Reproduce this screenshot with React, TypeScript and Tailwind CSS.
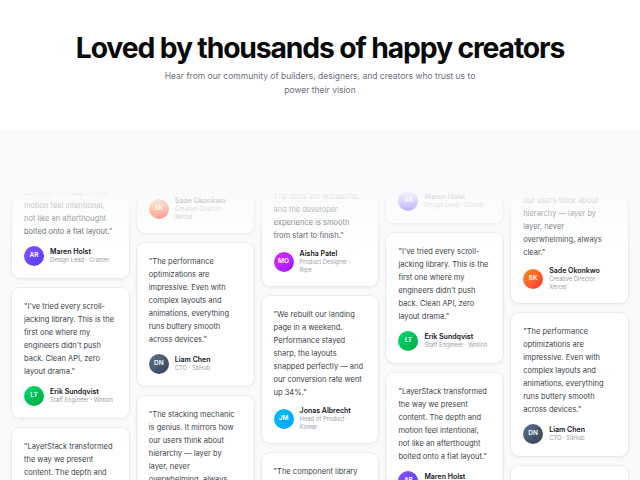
const people = {
  layer: {
    quote:
      "LayerStack transformed the way we present content. The depth and motion feel intentional, not like an afterthought bolted onto a flat layout.",
    name: "Maren Holst",
    role: ["Design Lead · Cramer"],
    initials: "AR",
    avatar: "bg-linear-to-br from-violet-500 to-indigo-600",
  },
  tried: {
    quote:
      "I've tried every scroll-jacking library. This is the first one where my engineers didn't push back. Clean API, zero layout drama.",
    name: "Erik Sundqvist",
    role: ["Staff Engineer · Wotion"],
    initials: "LT",
    avatar: "bg-linear-to-br from-green-400 to-green-600",
  },
  perf: {
    quote:
      "The performance optimizations are impressive. Even with complex layouts and animations, everything runs buttery smooth across devices.",
    name: "Liam Chen",
    role: ["CTO · SitHub"],
    initials: "DN",
    avatar: "bg-linear-to-br from-slate-500 to-slate-700",
  },
  stack: {
    quote:
      "The stacking mechanic is genius. It mirrors how our users think about hierarchy — layer by layer, never overwhelming, always clear.",
    name: "Sade Okonkwo",
    role: ["Creative Director ·", "Xercel"],
    initials: "SK",
    avatar: "bg-linear-to-br from-orange-400 to-red-500",
  },
  rebuilt: {
    quote:
      "We rebuilt our landing page in a weekend. Performance stayed sharp, the layouts snapped perfectly — and our conversion rate went up 34%.",
    name: "Jonas Albrecht",
    role: ["Head of Product ·", "Kinear"],
    initials: "JM",
    avatar: "bg-linear-to-br from-sky-400 to-sky-500",
  },
  library: {
    quote:
      "The component library saved our team months. The docs are wonderful, and the developer experience is smooth from start to finish.",
    name: "Aisha Patel",
    role: ["Product Designer ·", "Ripe"],
    initials: "MO",
    avatar: "bg-linear-to-br from-fuchsia-500 to-purple-600",
  },
};

type Key = keyof typeof people;

const columns: { offset: string; items: Key[] }[] = [
  { offset: "mt-[18px]", items: ["layer", "tried", "layer"] },
  { offset: "-mt-[44px]", items: ["stack", "perf", "stack"] },
  { offset: "mt-[22px]", items: ["library", "rebuilt", "library"] },
  { offset: "-mt-[37px]", items: ["layer", "tried", "layer"] },
  { offset: "mt-[26px]", items: ["stack", "perf", "stack"] },
];

function Card({ id }: { id: Key }) {
  const p = people[id];
  return (
    <div className="rounded-lg bg-white p-3 shadow-[0_0_0_1px_rgba(15,23,42,0.04),0_1px_4px_rgba(15,23,42,0.07)]">
      <p className="text-[7.5px] leading-[13px] text-[#3b3f46]">"{p.quote}"</p>
      <div className="mt-2 flex items-center gap-1.5">
        <div
          className={`flex h-5 w-5 shrink-0 items-center justify-center rounded-full text-[6.5px] font-semibold text-white ${p.avatar}`}
        >
          {p.initials}
        </div>
        <div>
          <p className="text-[7px] font-semibold leading-[8px] text-[#111318]">
            {p.name}
          </p>
          {p.role.map((line, i) => (
            <p key={i} className="whitespace-nowrap text-[5.8px] leading-[8px] text-[#9a9ea6]">
              {line}
            </p>
          ))}
        </div>
      </div>
    </div>
  );
}

export default function App() {
  return (
    <div className="h-[480px] w-[640px] overflow-hidden bg-white font-['Inter','Noto_Sans',sans-serif]">
      <header className="flex h-[130px] flex-col items-center pt-[33px]">
        <h1 className="text-[28.3px] font-bold leading-[30px] tracking-[-0.04em] text-[#0a0a0a]">
          Loved by thousands of happy creators
        </h1>
        <p className="mt-[6px] max-w-[320px] text-center text-[8.5px] leading-[14px] text-[#6b7079]">
          Hear from our community of builders, designers, and creators who trust us to power their
          vision
        </p>
      </header>

      <section className="relative h-[350px] overflow-hidden bg-[#f9fafb]">
        <div className="grid grid-cols-5 items-start gap-2 px-3">
          {columns.map((col, i) => (
            <div key={i} className={`flex flex-col gap-[10px] ${col.offset}`}>
              {col.items.map((id, j) => (
                <Card key={j} id={id} />
              ))}
            </div>
          ))}
        </div>
        <div className="pointer-events-none absolute inset-x-0 top-0 h-[115px] bg-linear-to-b from-[#f9fafb] from-52% to-[#f9fafb]/0" />
      </section>
    </div>
  );
}
